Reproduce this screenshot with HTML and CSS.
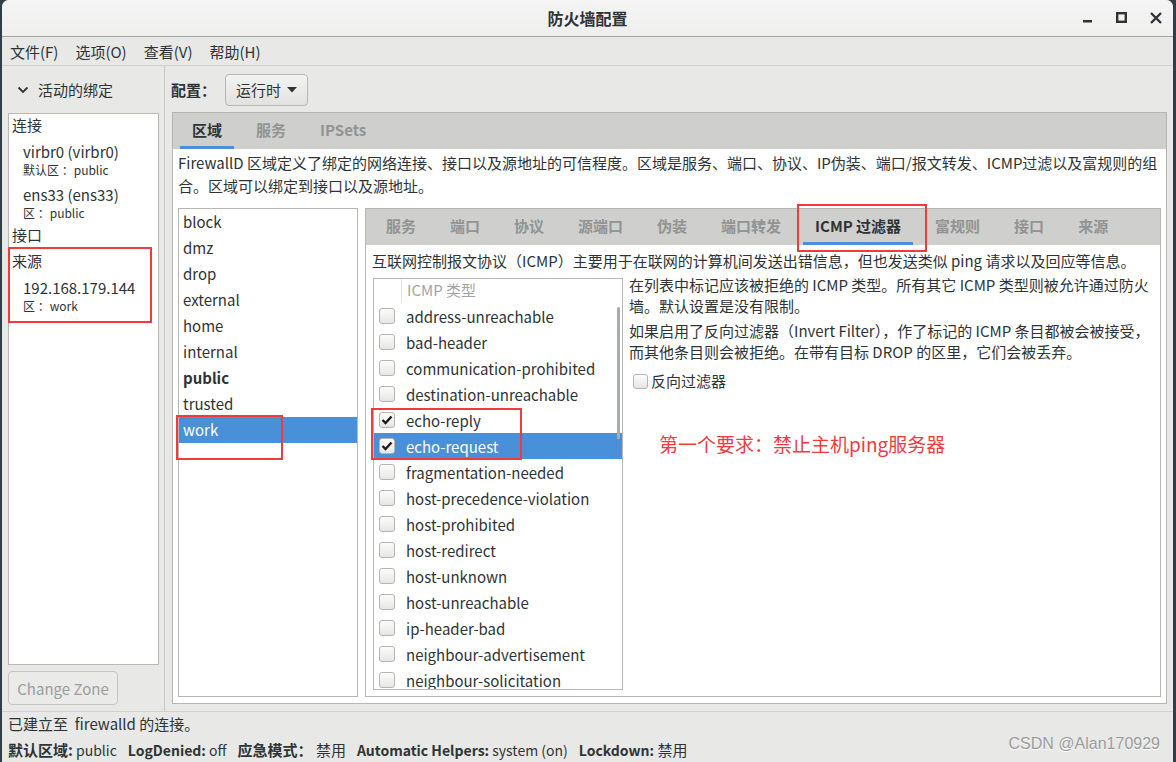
FILE: index.html
```html
<!DOCTYPE html>
<html lang="zh-CN">
<head>
  <meta charset="UTF-8" />
  <title>防火墙配置</title>
  <link rel="stylesheet" href="styles.css">
</head>
<body>
  <div class="window">
    <div class="titlebar">
      <span></span>
      <span class="title">防火墙配置</span>
      <div class="wm-buttons">
        <span class="wm-btn"><svg width="12" height="12" viewBox="0 0 12 12"><rect x="1" y="8" width="9" height="2.5" fill="#2e3436"/></svg></span>
        <span class="wm-btn"><svg width="12" height="12" viewBox="0 0 12 12"><rect x="1.2" y="1.2" width="8.6" height="8.6" fill="none" stroke="#2e3436" stroke-width="2.4"/></svg></span>
        <span class="wm-btn"><svg width="12" height="12" viewBox="0 0 12 12"><path d="M1 1 L11 11 M11 1 L1 11" stroke="#2e3436" stroke-width="2.4"/></svg></span>
      </div>
    </div>

    <div class="menubar">
      <span>文件(F)</span>
      <span>选项(O)</span>
      <span>查看(V)</span>
      <span>帮助(H)</span>
    </div>

    <div class="main">
      <aside class="side">
        <div class="side-head">
          <svg width="12" height="8" viewBox="0 0 12 8"><path d="M1.5 1.5 L6 6 L10.5 1.5" fill="none" stroke="#2e3436" stroke-width="1.8"/></svg>
          <span>活动的绑定</span>
        </div>
        <div class="bindings">
          <div class="bind-title">连接</div>
          <div class="bind-item">
            <div class="bind-name">virbr0 (virbr0)</div>
            <div class="bind-sub">默认区 ：public</div>
          </div>
          <div class="bind-item">
            <div class="bind-name">ens33 (ens33)</div>
            <div class="bind-sub">区 ：public</div>
          </div>
          <div class="bind-title">接口</div>
          <div class="bind-title">来源</div>
          <div class="bind-item">
            <div class="bind-name">192.168.179.144</div>
            <div class="bind-sub">区 ：work</div>
          </div>
        </div>
        <button class="change-zone" disabled>Change Zone</button>
      </aside>

      <section class="content">
        <div class="config-row">
          <span class="config-label">配置：</span>
          <button class="combo">运行时 <svg width="10" height="6" viewBox="0 0 10 6"><path d="M0 0 L10 0 L5 5.5 Z" fill="#2e3436"/></svg></button>
        </div>

        <div class="notebook outer">
          <div class="tabs">
            <span class="tab active">区域</span>
            <span class="tab">服务</span>
            <span class="tab">IPSets</span>
          </div>
          <div class="page">
            <p class="desc">FirewallD 区域定义了绑定的网络连接、接口以及源地址的可信程度。区域是服务、端口、协议、IP伪装、端口/报文转发、ICMP过滤以及富规则的组合。区域可以绑定到接口以及源地址。</p>
            <div class="zone-split">
              <ul class="zone-list">
                <li>block</li>
                <li>dmz</li>
                <li>drop</li>
                <li>external</li>
                <li>home</li>
                <li>internal</li>
                <li class="default">public</li>
                <li>trusted</li>
                <li class="selected">work</li>
              </ul>

              <div class="notebook inner">
                <div class="tabs">
                  <span class="tab">服务</span>
                  <span class="tab">端口</span>
                  <span class="tab">协议</span>
                  <span class="tab">源端口</span>
                  <span class="tab">伪装</span>
                  <span class="tab">端口转发</span>
                  <span class="tab active">ICMP 过滤器</span>
                  <span class="tab">富规则</span>
                  <span class="tab">接口</span>
                  <span class="tab">来源</span>
                </div>
                <div class="page icmp-page">
                  <p class="icmp-desc">互联网控制报文协议（ICMP）主要用于在联网的计算机间发送出错信息，但也发送类似 ping 请求以及回应等信息。</p>
                  <div class="icmp-split">
                    <div class="icmp-list">
                      <div class="icmp-head">
                        <span class="head-check"></span>
                        <span class="head-name">ICMP 类型</span>
                      </div>
                      <div class="icmp-row"><span class="check"></span>address-unreachable</div>
                      <div class="icmp-row"><span class="check"></span>bad-header</div>
                      <div class="icmp-row"><span class="check"></span>communication-prohibited</div>
                      <div class="icmp-row"><span class="check"></span>destination-unreachable</div>
                      <div class="icmp-row"><span class="check checked"><svg width="14" height="14" viewBox="0 0 14 14"><path d="M2.5 7 L5.5 10 L11.5 3.5" fill="none" stroke="#1c1c1c" stroke-width="2.4"/></svg></span>echo-reply</div>
                      <div class="icmp-row selected"><span class="check checked"><svg width="14" height="14" viewBox="0 0 14 14"><path d="M2.5 7 L5.5 10 L11.5 3.5" fill="none" stroke="#1c1c1c" stroke-width="2.4"/></svg></span>echo-request</div>
                      <div class="icmp-row"><span class="check"></span>fragmentation-needed</div>
                      <div class="icmp-row"><span class="check"></span>host-precedence-violation</div>
                      <div class="icmp-row"><span class="check"></span>host-prohibited</div>
                      <div class="icmp-row"><span class="check"></span>host-redirect</div>
                      <div class="icmp-row"><span class="check"></span>host-unknown</div>
                      <div class="icmp-row"><span class="check"></span>host-unreachable</div>
                      <div class="icmp-row"><span class="check"></span>ip-header-bad</div>
                      <div class="icmp-row"><span class="check"></span>neighbour-advertisement</div>
                      <div class="icmp-row"><span class="check"></span>neighbour-solicitation</div>
                      <div class="scroll-thumb"></div>
                    </div>
                    <div class="icmp-info">
                      <p>在列表中标记应该被拒绝的 ICMP 类型。所有其它 ICMP 类型则被允许通过防火墙。默认设置是没有限制。</p>
                      <p>如果启用了反向过滤器（Invert Filter），作了标记的 ICMP 条目都被会被接受，而其他条目则会被拒绝。在带有目标 DROP 的区里，它们会被丢弃。</p>
                      <label class="invert"><span class="check small"></span>反向过滤器</label>
                    </div>
                  </div>
                </div>
              </div>
            </div>
          </div>
        </div>
      </section>
    </div>

    <div class="statusbar">
      <div class="status-line">已建立至 &nbsp;firewalld 的连接。</div>
      <div class="status-info">
        <span><b class="cjk">默认区域:</b> public</span>
        <span><b>LogDenied:</b> off</span>
        <span class="cjk"><b>应急模式：</b> 禁用</span>
        <span><b>Automatic Helpers:</b> system (on)</span>
        <span><b>Lockdown:</b><span class="cjk"> 禁用</span></span>
      </div>
    </div>
  </div>

  <!-- annotations drawn over the screenshot -->
  <div class="mark mark-source"></div>
  <div class="mark mark-work"></div>
  <div class="mark mark-tab"></div>
  <div class="mark mark-echo"></div>
  <div class="note">第一个要求：禁止主机ping服务器</div>
  <div class="watermark">CSDN @Alan170929</div>
</body>
</html>
```

FILE: styles.css
```css
* {
  box-sizing: border-box;
}

body {
  margin: 0;
  width: 1176px;
  height: 762px;
  overflow: hidden;
  position: relative;
  background: #2f3e47;
  font-family: "Noto Sans CJK SC", "Noto Sans", sans-serif;
  font-size: 15px;
  color: #2e3436;
}

p {
  margin: 0;
}

.window {
  margin-left: 2px;
  width: 1171px;
  height: 762px;
  background: #e8e8e7;
  border-radius: 7px 7px 0 0;
  display: flex;
  flex-direction: column;
  overflow: hidden;
}

/* title bar */
.titlebar {
  height: 37px;
  flex: none;
  display: grid;
  grid-template-columns: 1fr auto 1fr;
  align-items: center;
  background: linear-gradient(#f4f4f4, #efefee);
  border-bottom: 1px solid #a2a2a0;
}

.title {
  font-size: 16px;
  font-weight: bold;
}

.wm-buttons {
  justify-self: end;
  display: flex;
}

.wm-btn {
  width: 34px;
  height: 36px;
  display: flex;
  align-items: center;
  justify-content: center;
}

/* menu */
.menubar {
  height: 29px;
  flex: none;
  display: flex;
  align-items: center;
  gap: 17px;
  padding-left: 8px;
  border-bottom: 1px solid #d2d2d0;
}

.main {
  flex: 1;
  display: flex;
  min-height: 0;
}

/* left side */
.side {
  width: 163px;
  flex: none;
  border-right: 1px solid #cacac8;
  display: flex;
  flex-direction: column;
  padding: 0 5px 6px 6px;
}

.side-head {
  height: 47px;
  display: flex;
  align-items: center;
  gap: 9px;
  padding-left: 9px;
}

.bindings {
  flex: 1;
  background: #fff;
  border: 1px solid #b9b9b6;
  padding-left: 3px;
}

.bind-title {
  line-height: 24px;
  margin-top: 2px;
}

.bind-title:first-child {
  margin-top: -1px;
}

.bind-item {
  padding-left: 11px;
  margin-top: 5px;
}

.bind-item + .bind-item {
  margin-top: 7px;
}

.bind-name {
  line-height: 20px;
}

.bind-sub {
  font-size: 12px;
  line-height: 16px;
}

.change-zone {
  margin-top: 6px;
  width: 110px;
  height: 34px;
  border: 1px solid #c4c4c1;
  border-radius: 4px;
  background: #eaeae9;
  color: #9a9d9d;
  font-family: inherit;
  font-size: 15px;
  padding: 0;
}

/* right content */
.content {
  flex: 1;
  display: flex;
  flex-direction: column;
  padding: 0 6px 7px 7px;
  min-width: 0;
}

.config-row {
  height: 46px;
  display: flex;
  align-items: center;
  padding-top: 1px;
}

.config-label {
  font-weight: bold;
  margin-left: -1px;
  width: 54px;
}

.combo {
  height: 32px;
  width: 83px;
  border: 1px solid #b6b6b3;
  border-radius: 4px;
  background: linear-gradient(#f3f3f2, #e2e2e0);
  font-family: inherit;
  font-size: 15px;
  color: #2e3436;
  display: flex;
  align-items: center;
  justify-content: center;
  gap: 6px;
  padding: 0;
}

.notebook {
  display: flex;
  flex-direction: column;
  border: 1px solid #b6b6b3;
  background: #fff;
}

.notebook.outer {
  flex: 1;
  min-height: 0;
}

.tabs {
  flex: none;
  height: 36px;
  background: #cfcfcd;
  display: flex;
  padding-left: 7px;
  gap: 10px;
}

.tab {
  padding: 0 12px;
  display: flex;
  align-items: center;
  font-weight: bold;
  color: #919494;
  border-bottom: 3px solid transparent;
}

.tab.active {
  color: #2e3436;
  border-bottom-color: #4a90d9;
}

.page {
  flex: 1;
  min-height: 0;
  display: flex;
  flex-direction: column;
  padding: 2px 5px 6px 5px;
}

.desc {
  line-height: 23px;
}

.zone-split {
  flex: 1;
  min-height: 0;
  display: flex;
  gap: 7px;
  margin-top: 11px;
}

.zone-list {
  list-style: none;
  margin: 0;
  padding: 0;
  width: 180px;
  flex: none;
  border: 1px solid #b6b6b3;
}

.zone-list li {
  height: 26px;
  line-height: 26px;
  padding-left: 4px;
}

.zone-list li.default {
  font-weight: bold;
}

.zone-list li.selected {
  background: #4a90d9;
  color: #fff;
}

.notebook.inner {
  flex: 1;
  min-width: 0;
}

.inner .tabs {
  gap: 10px;
  padding-left: 8px;
}

.icmp-page {
  padding: 4px 6px 6px 7px;
}

.icmp-desc {
  line-height: 24px;
  margin-left: -1px;
}

.icmp-split {
  flex: 1;
  min-height: 0;
  display: flex;
  gap: 6px;
  margin-top: 5px;
}

.icmp-list {
  position: relative;
  width: 250px;
  flex: none;
  border: 1px solid #b6b6b3;
  overflow: hidden;
}

.icmp-head {
  height: 24px;
  display: flex;
  color: #a2a4a4;
}

.head-check {
  width: 28px;
  border-right: 1px solid #e3e3e1;
}

.head-name {
  padding-left: 5px;
  line-height: 22px;
}

.icmp-row {
  height: 26px;
  display: flex;
  align-items: center;
  padding-left: 5px;
  gap: 11px;
}

.icmp-row.selected {
  background: #4a90d9;
  color: #fff;
}

.check {
  width: 16px;
  height: 16px;
  flex: none;
  border: 1px solid #b4b4b1;
  border-radius: 3px;
  background: linear-gradient(#fcfcfc, #e6e6e4);
  display: flex;
  align-items: center;
  justify-content: center;
}

.check.small {
  width: 15px;
  height: 15px;
}

.scroll-thumb {
  position: absolute;
  right: 2px;
  top: 28px;
  width: 3px;
  height: 132px;
  border-radius: 2px;
  background: #a9abab;
}

.icmp-info {
  flex: 1;
  min-width: 0;
  margin-top: -4px;
}

.icmp-info p {
  line-height: 21px;
  margin-bottom: 4px;
}

.invert {
  display: flex;
  align-items: center;
  gap: 3px;
  margin-top: 8px;
  margin-left: 4px;
  line-height: 22px;
}

/* status bar */
.statusbar {
  height: 51px;
  flex: none;
  border-top: 1px solid #d0d0ce;
  padding: 0 6px 0 6px;
}

.status-line {
  line-height: 23px;
}

.status-info {
  margin-top: 3px;
  line-height: 24px;
  display: flex;
  gap: 11px;
  font-size: 14px;
}

.status-info .cjk {
  font-size: 15px;
}

.status-info b {
  font-weight: bold;
}

/* annotations */
.mark {
  position: absolute;
  border: 2px solid #f23a3a;
}

.mark-source {
  left: 8px;
  top: 247px;
  width: 144px;
  height: 76px;
}

.mark-work {
  left: 176px;
  top: 415px;
  width: 107px;
  height: 45px;
}

.mark-tab {
  left: 797px;
  top: 204px;
  width: 130px;
  height: 48px;
}

.mark-echo {
  left: 371px;
  top: 408px;
  width: 151px;
  height: 52px;
}

.note {
  position: absolute;
  left: 659px;
  top: 431px;
  font-size: 19px;
  line-height: 26px;
  color: #f23a3f;
}

.watermark {
  position: absolute;
  right: 16px;
  top: 735px;
  font-family: "Liberation Sans", sans-serif;
  font-size: 16px;
  color: #9b9b9b;
  text-shadow: 0 1px 0 #fff;
}
```
